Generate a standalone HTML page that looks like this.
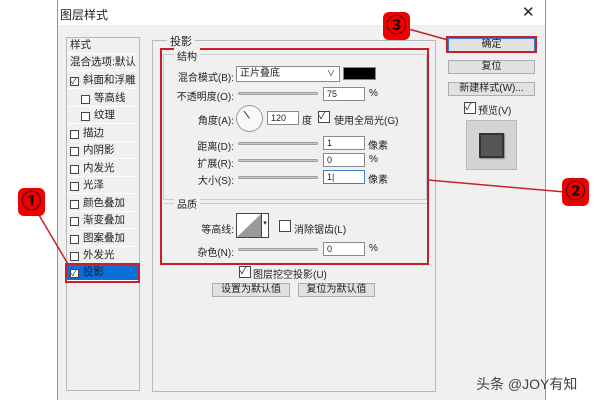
<!DOCTYPE html>
<html><head><meta charset="utf-8"><style>
*{margin:0;padding:0;box-sizing:border-box}
body{width:600px;height:400px;background:#fff;position:relative;overflow:hidden;font-family:"Liberation Sans","Noto Sans CJK SC",sans-serif;font-size:10px;color:#222}
.a{position:absolute;white-space:nowrap}
.dlg{position:absolute;left:57px;top:0;width:489px;height:400px;background:#f0f0f0;border-left:1px solid #6a9fd0;border-right:1px solid #6a9fd0}
.tb{position:absolute;left:57px;top:0;width:489px;height:25px;background:#fff;border-left:1px solid #6a9fd0;border-right:1px solid #6a9fd0}
.box{position:absolute;border:1px solid #b8b8b8}
.cb{position:absolute;width:9px;height:9px;border:1px solid #444;background:#fff}
.li{position:absolute;left:67px;width:71px;height:17px;border-bottom:1px solid #fff;padding-left:3px;line-height:17px;font-size:10.5px}
.inp{position:absolute;height:14px;border:1px solid #8a8a8a;background:#fff;padding-left:3px;line-height:12px;font-size:9px}
.sl{position:absolute;height:3px;background:#c8c8c8;border:1px solid #a0a0a0;border-radius:2px}
.btn{position:absolute;height:14px;border:1px solid #adadad;background:#e1e1e1;text-align:center;line-height:12px}
.red{position:absolute;border:2px solid #c8202a}
.num{position:absolute;width:27px;height:28px;background:#e00;border-radius:6px;color:#200;font-size:20px;text-align:center;line-height:28px;font-weight:bold}
.lab{position:absolute;text-align:right;width:80px}
</style></head><body>
<div class="dlg"></div><div class="tb"></div>
<div class="a" style="left:60px;top:6px;font-size:12px">图层样式</div>
<div class="a" style="left:522px;top:3px;font-size:15px">✕</div>

<div class="box" style="left:66px;top:37px;width:74px;height:354px"></div>
<div class="li" style="top:37px">样式</div>
<div class="li" style="top:54px">混合选项:默认</div>
<div class="li" style="top:72px;padding-left:16px">斜面和浮雕</div>
<div class="li" style="top:90px;padding-left:27px">等高线</div>
<div class="li" style="top:107px;padding-left:27px">纹理</div>
<div class="li" style="top:125px;padding-left:16px">描边</div>
<div class="li" style="top:142px;padding-left:16px">内阴影</div>
<div class="li" style="top:160px;padding-left:16px">内发光</div>
<div class="li" style="top:177px;padding-left:16px">光泽</div>
<div class="li" style="top:195px;padding-left:16px">颜色叠加</div>
<div class="li" style="top:212px;padding-left:16px">渐变叠加</div>
<div class="li" style="top:230px;padding-left:16px">图案叠加</div>
<div class="li" style="top:247px;padding-left:16px">外发光</div>
<div class="li" style="top:264px;background:#0a6fd6;color:#123;padding-left:16px">投影</div>
<div class="cb" style="left:70px;top:77px;font-size:8px;line-height:7px">✓</div>
<div class="cb" style="left:81px;top:95px"></div><div class="cb" style="left:81px;top:112px"></div>
<div class="cb" style="left:70px;top:130px"></div><div class="cb" style="left:70px;top:147px"></div>
<div class="cb" style="left:70px;top:165px"></div><div class="cb" style="left:70px;top:182px"></div>
<div class="cb" style="left:70px;top:200px"></div><div class="cb" style="left:70px;top:217px"></div>
<div class="cb" style="left:70px;top:235px"></div><div class="cb" style="left:70px;top:252px"></div>
<div class="cb" style="left:70px;top:269px;font-size:8px;line-height:7px">✓</div>
<div class="red" style="left:65px;top:263px;width:75px;height:20px"></div>

<div class="box" style="left:152px;top:40px;width:284px;height:352px"></div>
<div class="a" style="left:167px;top:33px;background:#f0f0f0;padding:0 3px;font-size:11px">投影</div>
<div class="box" style="left:163px;top:54px;width:264px;height:146px;border-color:#ccc"></div>
<div class="red" style="left:160px;top:48px;width:269px;height:217px"></div>
<div class="a" style="left:174px;top:48px;background:#f0f0f0;padding:0 3px">结构</div>
<div class="lab" style="left:154px;top:69px">混合模式(B):</div>
<div class="inp" style="left:236px;top:66px;width:104px;height:16px;font-size:10px;line-height:14px">正片叠底<span style="position:absolute;right:4px;font-size:8px">∨</span></div>
<div class="a" style="left:343px;top:67px;width:33px;height:13px;background:#000;border:1px solid #888"></div>
<div class="lab" style="left:154px;top:88px">不透明度(O):</div>
<div class="sl" style="left:238px;top:92px;width:80px"></div>
<div class="inp" style="left:323px;top:87px;width:42px">75</div><div class="a" style="left:369px;top:88px">%</div>
<div class="lab" style="left:154px;top:112px">角度(A):</div>
<div class="a" style="left:236px;top:105px;width:27px;height:27px;border-radius:50%;border:1px solid #999;background:#f8f8f8"></div>
<svg class="a" style="left:236px;top:105px" width="27" height="27"><line x1="13.5" y1="13.5" x2="8" y2="6" stroke="#333"/></svg>
<div class="inp" style="left:267px;top:111px;width:32px">120</div><div class="a" style="left:302px;top:112px">度</div>
<div class="cb" style="left:318px;top:111px;width:12px;height:12px;font-size:10px;line-height:10px">✓</div>
<div class="a" style="left:334px;top:112px">使用全局光(G)</div>
<div class="lab" style="left:154px;top:138px">距离(D):</div><div class="sl" style="left:238px;top:142px;width:80px"></div>
<div class="inp" style="left:323px;top:136px;width:42px">1</div><div class="a" style="left:368px;top:137px">像素</div>
<div class="lab" style="left:154px;top:155px">扩展(R):</div><div class="sl" style="left:238px;top:159px;width:80px"></div>
<div class="inp" style="left:323px;top:153px;width:42px">0</div><div class="a" style="left:369px;top:154px">%</div>
<div class="lab" style="left:154px;top:172px">大小(S):</div><div class="sl" style="left:238px;top:176px;width:80px"></div>
<div class="inp" style="left:323px;top:170px;width:42px;border-color:#3b7fd0">1|</div><div class="a" style="left:368px;top:171px">像素</div>
<div class="a" style="left:163px;top:203px;width:264px;border-top:1px solid #ccc"></div>
<div class="a" style="left:174px;top:196px;background:#f0f0f0;padding:0 3px">品质</div>
<div class="lab" style="left:154px;top:221px">等高线:</div>
<div class="a" style="left:236px;top:213px;width:33px;height:25px;border:1px solid #444;background:#fff"></div>
<svg class="a" style="left:237px;top:214px" width="24" height="23"><polygon points="0,23 24,0 24,23" fill="#999"/></svg>
<div class="a" style="left:261px;top:214px;width:7px;height:23px;border-left:1px solid #444;font-size:7px;line-height:20px;text-align:center">▾</div>
<div class="cb" style="left:279px;top:220px;width:12px;height:12px"></div>
<div class="a" style="left:294px;top:221px">消除锯齿(L)</div>
<div class="lab" style="left:154px;top:244px">杂色(N):</div><div class="sl" style="left:238px;top:248px;width:80px"></div>
<div class="inp" style="left:323px;top:242px;width:42px">0</div><div class="a" style="left:369px;top:243px">%</div>
<div class="cb" style="left:239px;top:266px;width:12px;height:12px;font-size:10px;line-height:10px">✓</div>
<div class="a" style="left:253px;top:266px">图层挖空投影(U)</div>
<div class="btn" style="left:212px;top:283px;width:78px">设置为默认值</div>
<div class="btn" style="left:298px;top:283px;width:77px">复位为默认值</div>

<div class="btn" style="left:448px;top:38px;width:87px;border-color:#3b7fd0">确定</div>
<div class="red" style="left:446px;top:36px;width:91px;height:17px"></div>
<div class="btn" style="left:448px;top:60px;width:87px">复位</div>
<div class="btn" style="left:448px;top:82px;width:87px">新建样式(W)...</div>
<div class="cb" style="left:464px;top:102px;width:12px;height:12px;font-size:10px;line-height:10px">✓</div>
<div class="a" style="left:478px;top:102px">预览(V)</div>
<div class="a" style="left:466px;top:120px;width:51px;height:50px;background:#d4d4d4;border:1px solid #bbb"></div>
<div class="a" style="left:479px;top:133px;width:25px;height:25px;background:#555;border:2px solid #333;box-shadow:1px 1px 1px #888"></div>

<svg class="a" style="left:0;top:0" width="600" height="400"><g stroke="#c8202a" stroke-width="1.5"><line x1="36" y1="210" x2="68" y2="264"/><line x1="405" y1="28" x2="448" y2="40"/><line x1="428" y1="180" x2="565" y2="192"/></g></svg>
<div class="num" style="left:18px;top:188px">①</div>
<div class="num" style="left:383px;top:12px">③</div>
<div class="num" style="left:562px;top:178px">②</div>
<div class="a" style="left:476px;top:374px;font-size:14px;color:#444">头条 @JOY有知</div>
</body></html>
